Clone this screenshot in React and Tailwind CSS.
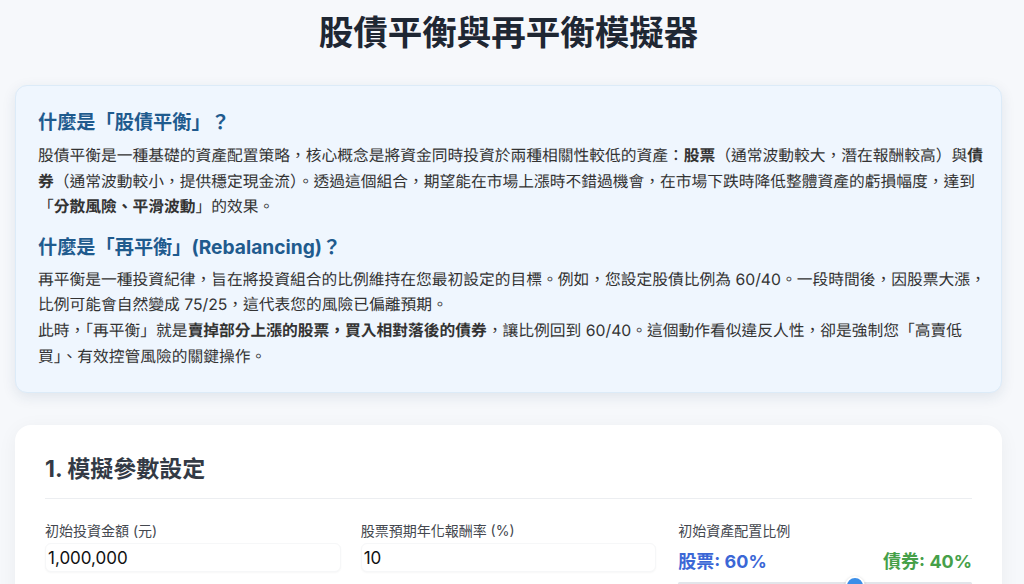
import React, { useState } from 'react';

function App() {
  const [amount, setAmount] = useState('1,000,000');
  const [stockReturn, setStockReturn] = useState('10');
  const stockRatio = 60;

  return (
    <div className="min-h-screen bg-[#f6f8fb] font-['Inter','Noto_Sans_CJK_TC',sans-serif] text-[#333]">
      <div className="ml-[15px] mr-[22px] pt-[12px] pb-10">
        <h1 className="text-center text-[34.5px] leading-[42px] font-bold text-[#1f2733] mb-[31px]">
          股債平衡與再平衡模擬器
        </h1>

        {/* intro */}
        <div className="rounded-xl border border-[#dcebf8] bg-[#eff6fe] shadow-[0_4px_14px_rgba(30,60,100,0.10)] px-[22px] pt-6 pb-[23px]">
          <h3 className="text-[19.2px] leading-6 font-bold text-[#1f5b8e] mb-[9px]">
            什麼是「股債平衡」？
          </h3>
          <p className="text-[15.75px] [text-rendering:geometricPrecision] leading-[25.6px] whitespace-nowrap">
            股債平衡是一種基礎的資產配置策略，核心概念是將資金同時投資於兩種相關性較低的資產：<strong className="font-bold">股票</strong>（通常波動較大，潛在報酬較高）與<strong className="font-bold">債</strong>
            <br />
            <strong className="font-bold">券</strong>（通常波動較小，提供穩定現金流）。透過這個組合，期望能在市場上漲時不錯過機會，在市場下跌時降低整體資產的虧損幅度，達到
            <br />
            「<strong className="font-bold">分散風險、平滑波動</strong>」的效果。
          </p>

          <h3 className="text-[19.2px] leading-6 font-bold text-[#1f5b8e] mt-[15px] mb-[8px]">
            什麼是「再平衡」(Rebalancing)？
          </h3>
          <p className="text-[15.75px] [text-rendering:geometricPrecision] leading-[25.6px] whitespace-nowrap">
            再平衡是一種投資紀律，旨在將投資組合的比例維持在您最初設定的目標。例如，您設定股債比例為 60/40。一段時間後，因股票大漲，
            <br />
            比例可能會自然變成 75/25，這代表您的風險已偏離預期。
            <br />
            此時，「再平衡」就是<strong className="font-bold">賣掉部分上漲的股票，買入相對落後的債券</strong>，讓比例回到 60/40。這個動作看似違反人性，卻是強制您「高賣低
            <br />
            買」、有效控管風險的關鍵操作。
          </p>
        </div>

        {/* parameters */}
        <div className="mt-8 rounded-2xl bg-white shadow-[0_4px_20px_rgba(0,0,0,0.05)] px-[30px] pt-[30px] pb-8">
          <h2 className="text-[23px] leading-7 font-bold text-[#333a45] pb-[15px] border-b border-[#eceef1]">
            1. 模擬參數設定
          </h2>

          <div className="grid grid-cols-3 gap-x-5 mt-[22px]">
            <div>
              <label className="block text-[14px] leading-5 text-[#44484f] mb-[2px]">初始投資金額 (元)</label>
              <input
                value={amount}
                onChange={(e) => setAmount(e.target.value)}
                className="w-full h-[29px] px-[2px] text-[17px] text-[#111] bg-white rounded-md border border-[#f6f7f8] shadow-[0_1px_2px_rgba(0,0,0,0.035)] outline-none"
              />
            </div>
            <div>
              <label className="block text-[14px] leading-5 text-[#44484f] mb-[2px]">股票預期年化報酬率 (%)</label>
              <input
                value={stockReturn}
                onChange={(e) => setStockReturn(e.target.value)}
                className="w-full h-[29px] px-[2px] text-[17px] text-[#111] bg-white rounded-md border border-[#f6f7f8] shadow-[0_1px_2px_rgba(0,0,0,0.035)] outline-none"
              />
            </div>
            <div className="pl-[2px]">
              <label className="block text-[14px] leading-5 text-[#44484f] mb-[9px]">初始資產配置比例</label>
              <div className="flex justify-between text-[18px] leading-6 font-bold">
                <span className="text-[#3b67d6]">股票: {stockRatio}%</span>
                <span className="text-[#46a049]">債券: {100 - stockRatio}%</span>
              </div>
              <div className="relative h-[20px] mt-[2px]">
                <div className="absolute left-0 right-0 top-[6px] h-[3px] rounded bg-[#e2e5ea]" />
                <div
                  className="absolute top-0 w-[20px] h-[20px] -ml-[10px] rounded-full bg-[#3b8ee8] border-2 border-white shadow-[0_1px_3px_rgba(0,0,0,0.25)]"
                  style={{ left: `${stockRatio}%` }}
                />
              </div>
            </div>
          </div>
        </div>
      </div>
    </div>
  );
}

export default App;
